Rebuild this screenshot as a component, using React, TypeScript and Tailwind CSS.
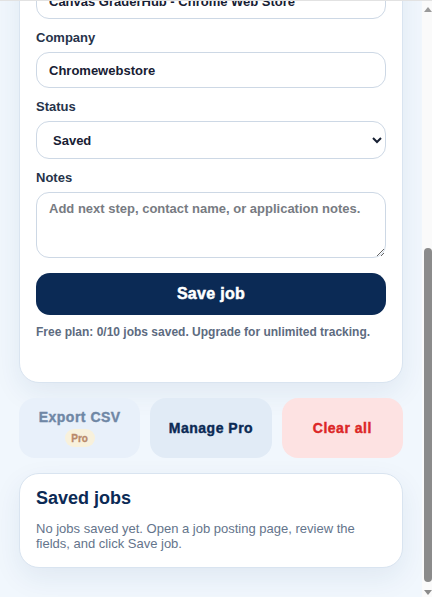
import React, { useLayoutEffect, useRef } from "react";

function Field({ label, children }: { label: string; children: React.ReactNode }) {
  return (
    <div className="flex flex-col gap-[6px]">
      <label className="text-[13px] leading-4 font-bold text-[#26334a]">{label}</label>
      {children}
    </div>
  );
}

const inputCls =
  "h-[36px] w-full rounded-[13px] border border-[#cdd8e5] bg-white px-3 text-[13px] font-bold text-[#172033] outline-none";

export default function App() {
  const scrollRef = useRef<HTMLDivElement>(null);

  useLayoutEffect(() => {
    const el = scrollRef.current;
    if (el) el.scrollTop = el.scrollHeight;
  }, []);

  return (
    <div className="flex h-[597px] w-[432px] overflow-hidden border-t border-[#e2e2e2] font-['Liberation_Sans',Arial,sans-serif]">
      <div ref={scrollRef} className="h-full flex-1 overflow-hidden bg-[#f1f7fd]">
        <div className="flex flex-col gap-[15px] px-[19px] pt-5 pb-[29px]">
          {/* Main card */}
          <div className="rounded-[20px] border border-[#d9e4f0] bg-white px-4 pt-4 pb-[42px] shadow-[0_10px_28px_rgba(30,64,120,0.08)]">
            <div className="mb-[14px] flex flex-col gap-1">
              <h1 className="text-[18px] leading-[22px] font-bold text-[#0b2a55]">Save this job</h1>
              <p className="text-[13px] leading-[16px] text-[#64748b]">
                Review the details detected on this page before saving.
              </p>
            </div>
            <div className="flex flex-col gap-[11px]">
              <Field label="Job URL">
                <input className={inputCls} defaultValue="https://chromewebstore.google.com/detail/canvas-graderhub" />
              </Field>
              <Field label="Location">
                <input className={inputCls} defaultValue="Remote" />
              </Field>
              <Field label="Job title">
                <input className={inputCls} defaultValue="Canvas GraderHub - Chrome Web Store" />
              </Field>
              <Field label="Company">
                <input className={inputCls} defaultValue="Chromewebstore" />
              </Field>
              <Field label="Status">
                <select
                  className="h-[38px] w-full rounded-[13px] border border-[#cdd8e5] bg-white px-3 text-[13px] font-bold text-[#172033] outline-none"
                  defaultValue="Saved"
                >
                  <option>Saved</option>
                  <option>Applied</option>
                  <option>Interviewing</option>
                  <option>Offer</option>
                  <option>Rejected</option>
                </select>
              </Field>
              <Field label="Notes">
                <textarea
                  className="h-[66px] w-full rounded-[13px] border border-[#cdd8e5] bg-white px-3 py-[8px] text-[13px] leading-[16px] font-bold text-[#172033] outline-none placeholder:text-[#777b82]"
                  placeholder="Add next step, contact name, or application notes."
                />
              </Field>
            </div>
            <button className="mt-[15px] flex h-[42px] w-full items-center justify-center rounded-[14px] bg-[#0b2a55] text-[16px] font-bold tracking-[0.3px] text-white [-webkit-text-stroke:0.5px_#ffffff]">
              Save job
            </button>
            <p className="mt-[9px] text-[12px] leading-4 font-bold text-[#5d6b80]">
              Free plan: 0/10 jobs saved. Upgrade for unlimited tracking.
            </p>
          </div>

          {/* Action buttons */}
          <div className="grid grid-cols-3 gap-[10px]">
            <button className="flex h-[60px] flex-col items-center justify-center gap-1 rounded-[16px] bg-[#e8f0fa]">
              <span className="text-[14px] leading-4 font-bold tracking-[0.5px] text-[#6f87a5] [-webkit-text-stroke:0.4px_#6f87a5]">
                Export CSV
              </span>
              <span className="flex h-[18px] w-[30px] items-center justify-center rounded-full bg-[#f8f1dc] text-[10px] font-bold text-[#b9896a] [-webkit-text-stroke:0.3px_#b9896a]">
                Pro
              </span>
            </button>
            <button className="flex h-[60px] items-center justify-center rounded-[16px] bg-[#e1ebf6] text-[14px] font-bold tracking-[0.5px] text-[#0b2a55] [-webkit-text-stroke:0.4px_#0b2a55]">
              Manage Pro
            </button>
            <button className="flex h-[60px] items-center justify-center rounded-[16px] bg-[#fde2e2] text-[14px] font-bold tracking-[0.5px] text-[#dc2626] [-webkit-text-stroke:0.4px_#dc2626]">
              Clear all
            </button>
          </div>

          {/* Saved jobs */}
          <div className="rounded-[20px] border border-[#d9e4f0] bg-white px-4 pt-[13px] pb-4 shadow-[0_10px_28px_rgba(30,64,120,0.08)]">
            <h2 className="text-[18px] leading-[22px] font-bold text-[#0b2a55]">Saved jobs</h2>
            <p className="mt-3 text-[13px] leading-[15px] text-[#64748b]">
              No jobs saved yet. Open a job posting page, review the fields, and click Save job.
            </p>
          </div>
        </div>
      </div>

      {/* Scrollbar */}
      <div className="flex h-full w-[10px] flex-col bg-[#fafafa] pt-[6px] pb-[2px]">
        <svg width="8" height="5" viewBox="0 0 8 5" className="ml-[2px] block">
          <polygon points="4,0 8,5 0,5" fill="#9a9a9a" />
        </svg>
        <div className="flex-1" />
        <div className="ml-[2px] h-[334px] w-[8px] rounded-[4px] bg-[#8b8b8b]" />
        <svg width="8" height="5" viewBox="0 0 8 5" className="mt-[8px] ml-[2px] block">
          <polygon points="0,0 8,0 4,5" fill="#8b8b8b" />
        </svg>
      </div>
    </div>
  );
}
